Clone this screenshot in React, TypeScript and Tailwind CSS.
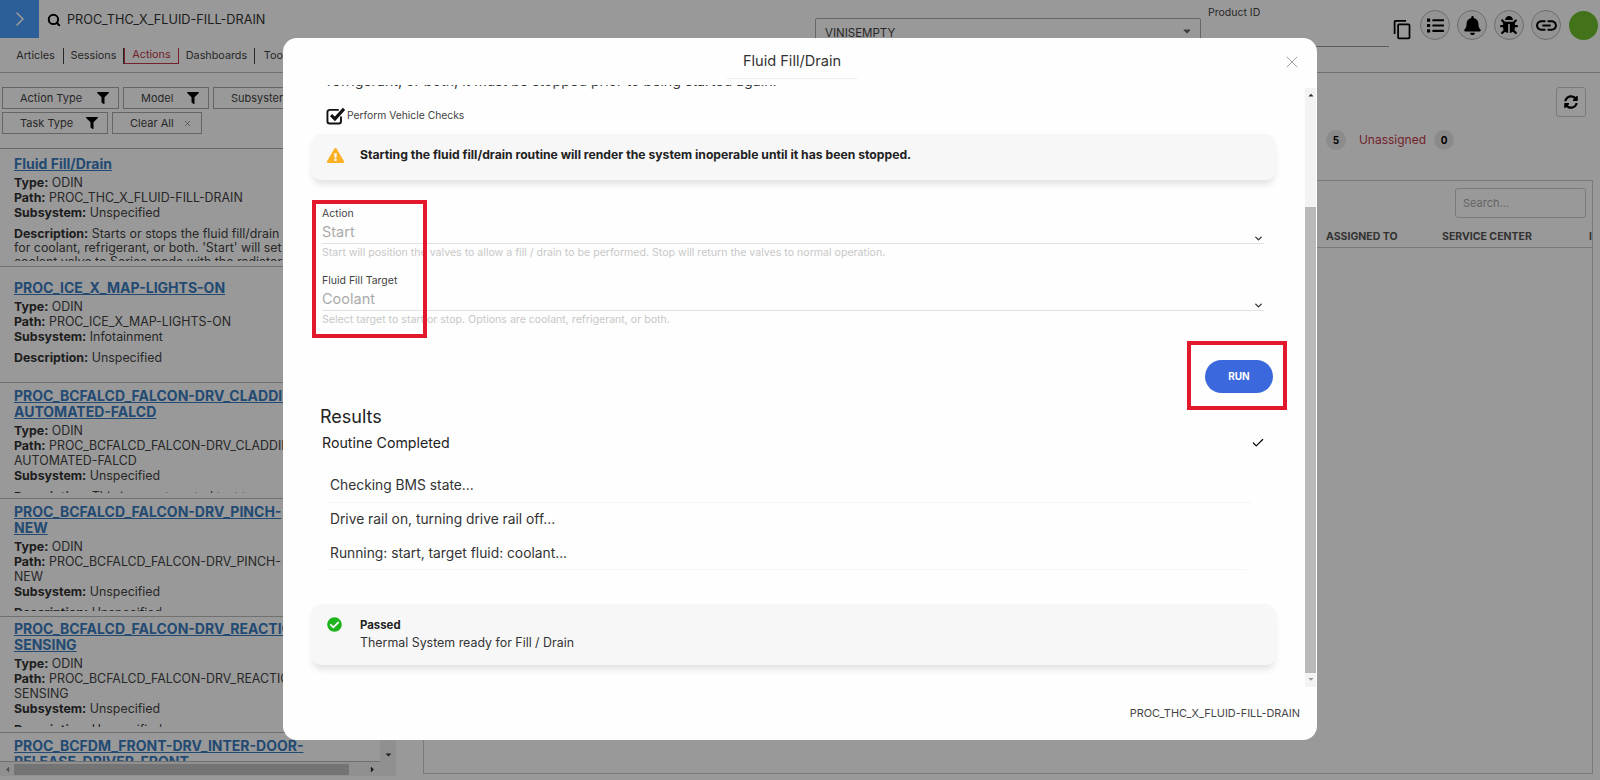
import { ChevronRight, Search, X, ChevronDown, Check } from 'lucide-react'
import { FaFilter, FaList, FaBell, FaBug, FaSyncAlt, FaExclamationTriangle, FaCheckCircle, FaCaretDown, FaCaretUp, FaCaretLeft, FaCaretRight } from 'react-icons/fa'
import { MdOutlineContentCopy, MdLink } from 'react-icons/md'

const CARDS = [
  { title: ['Fluid Fill/Drain'], path: ['PROC_THC_X_FLUID-FILL-DRAIN'], sub: 'Unspecified', desc: ['Starts or stops the fluid fill/drain routine', "for coolant, refrigerant, or both. 'Start' will set the", 'coolant valve to Series mode with the radiator'], h: 'h-[118px]', pad: 'pt-[7px] pb-[5px]' },
  { title: ['PROC_ICE_X_MAP-LIGHTS-ON'], path: ['PROC_ICE_X_MAP-LIGHTS-ON'], sub: 'Infotainment', desc: ['Unspecified'], h: 'h-[116px]', pad: 'pt-[13px] pb-[5px]' },
  { title: ['PROC_BCFALCD_FALCON-DRV_CLADDING-', 'AUTOMATED-FALCD'], path: ['PROC_BCFALCD_FALCON-DRV_CLADDING-', 'AUTOMATED-FALCD'], sub: 'Unspecified', desc: ['This is an automated test to ensure'], h: 'h-[116px]', pad: 'pt-[5px] pb-[5px]' },
  { title: ['PROC_BCFALCD_FALCON-DRV_PINCH-', 'NEW'], path: ['PROC_BCFALCD_FALCON-DRV_PINCH-', 'NEW'], sub: 'Unspecified', desc: ['Unspecified'], h: 'h-[118px]', pad: 'pt-[5px] pb-[5px]' },
  { title: ['PROC_BCFALCD_FALCON-DRV_REACTION-', 'SENSING'], path: ['PROC_BCFALCD_FALCON-DRV_REACTION-', 'SENSING'], sub: 'Unspecified', desc: ['Unspecified'], h: 'h-[116px]', pad: 'pt-[4px] pb-[5px]' },
  { title: ['PROC_BCFDM_FRONT-DRV_INTER-DOOR-', 'RELEASE-DRIVER-FRONT'], path: [], sub: '', desc: [], h: 'h-[29px]', pad: 'pt-[5px] pb-0' },
]

function FilterButton({ label, width, icon = true }: { label: string; width: string; icon?: boolean }) {
  return (
    <div className={`${width} h-[22px] border border-[#a8a8a8] flex items-center justify-between pl-[17px] pr-[9px] text-[11px] text-[#444]`}>
      <span>{label}</span>
      {icon ? <FaFilter size={12} className="text-black" /> : <X size={9} className="text-[#777]" />}
    </div>
  )
}

function Tab({ label, width, active }: { label: string; width: string; active?: boolean }) {
  return (
    <div className={`${width} h-[16px] flex items-center justify-center text-[10.8px] whitespace-nowrap ${active ? 'border border-t-0 border-[#c0394b] text-[#c0394b]' : 'border-r border-[#444] text-[#444]'}`}>
      {label}
    </div>
  )
}

function CircleIcon({ children }: { children: React.ReactNode }) {
  return (
    <div className="w-[30px] h-[30px] rounded-full border border-[#b5b5b5] bg-[#f5f5f5] flex items-center justify-center text-black">
      {children}
    </div>
  )
}

function CheckedBox() {
  return (
    <svg width="20" height="20" viewBox="0 0 18 18" fill="none" className="shrink-0">
      <path d="M13.5 9.5v4.2a2 2 0 0 1-2 2H3.3a2 2 0 0 1-2-2V5.5a2 2 0 0 1 2-2h8.2" stroke="#111" strokeWidth="1.7" />
      <path d="M4.6 8.2 8 11.6 16.2 2.6" stroke="#111" strokeWidth="2.8" />
    </svg>
  )
}

function Field({ label, value, hint }: { label: string; value: string; hint: string }) {
  return (
    <div className="h-[67px] ml-[11px] w-[942px]">
      <div className="h-[14px] leading-[14px] text-[10.5px] text-[#444]">{label}</div>
      <div className="h-[23px] border-b border-[#e2e2e2] flex items-center justify-between">
        <span className="text-[14.5px] text-[#aaa]">{value}</span>
        <ChevronDown size={11} strokeWidth={3} className="text-[#333] mt-[13px]" />
      </div>
      <div className="mt-[3px] h-[12px] leading-[12px] text-[10.6px] text-[#c8c8c8] whitespace-nowrap">{hint}</div>
    </div>
  )
}

function InfoCard({ height, children }: { height: string; children: React.ReactNode }) {
  return (
    <div className={`${height} w-[965px] rounded-[10px] bg-[#f7f7f7] shadow-[0_6px_7px_-2px_rgba(0,0,0,0.12)] relative flex items-start`}>
      {children}
    </div>
  )
}

export default function App() {
  return (
    <div className="relative h-[780px] w-[1600px] overflow-hidden bg-white font-['Inter',sans-serif] text-[#333]">
      {/* Top bar */}
      <div className="h-[48px] flex items-start">
        <div className="w-[39px] h-[38px] bg-[#4a9efc] flex items-center justify-center text-white">
          <ChevronRight size={24} strokeWidth={1.6} />
        </div>
        <Search size={14} strokeWidth={3.4} className="text-black ml-[8px] mt-[13px]" />
        <div className="ml-[6px] mt-[10px] w-[207px] text-[12.7px] text-[#333] whitespace-nowrap">PROC_THC_X_FLUID-FILL-DRAIN</div>
        <div className="ml-[541px] mt-[18px] w-[386px] h-[30px] border border-[#aaa] rounded-t-[2px] flex items-start justify-between pl-[9px] pr-[7px] pt-[6px] text-[11.5px] text-[#444]">
          VINISEMPTY
          <FaCaretDown size={12} className="text-[#666]" />
        </div>
        <div className="ml-[7px] w-[181px] h-[47px] border-b border-[#999] pt-[5px] text-[10.5px] text-[#444]">Product ID</div>
        <div className="ml-[3px] mt-[10px] flex items-center gap-[7px]">
          <MdOutlineContentCopy size={21} className="text-black mt-[8px]" />
          <CircleIcon><FaList size={17} /></CircleIcon>
          <CircleIcon><FaBell size={19} /></CircleIcon>
          <CircleIcon><FaBug size={18} /></CircleIcon>
          <CircleIcon><MdLink size={25} /></CircleIcon>
          <div className="w-[29px] h-[29px] ml-[1px] rounded-full bg-[#6fc02c]" />
        </div>
      </div>

      {/* Tabs */}
      <div className="h-[25px] border-b border-[#bbb] flex items-start pl-[8px]">
        <Tab label="Articles" width="w-[56px]" />
        <Tab label="Sessions" width="w-[60px]" />
        <Tab label="Actions" width="w-[55px]" active />
        <Tab label="Dashboards" width="w-[76px]" />
        <Tab label="Tools" width="w-[46px]" />
      </div>

      <div className="flex">
        {/* Actions list */}
        <div className="w-[396px] shrink-0">
          <div className="h-[75px] pt-[14px] pl-[2px] flex flex-col gap-[3px]">
            <div className="flex gap-[4px]">
              <FilterButton label="Action Type" width="w-[117px]" />
              <FilterButton label="Model" width="w-[86px]" />
              <FilterButton label="Subsystem" width="w-[110px]" />
            </div>
            <div className="flex gap-[4px]">
              <FilterButton label="Task Type" width="w-[106px]" />
              <FilterButton label="Clear All" width="w-[90px]" icon={false} />
            </div>
          </div>
          <div className="flex h-[632px] relative">
            <div className="w-[380px] h-[614px] overflow-hidden border-t border-[#aaa]">
              {CARDS.map((c) => (
                <div key={c.title[0]} className={`${c.h} ${c.pad} pl-[14px] border-b border-[#bbb] overflow-hidden`}>
                  <div className="h-full overflow-hidden">
                    <div className="text-[14px] leading-[16px] font-bold underline text-[#3a7cc0] whitespace-nowrap">
                      {c.title.map((t) => <div key={t}>{t}</div>)}
                    </div>
                    {c.sub && (
                      <div className="mt-[3px] text-[12.4px] leading-[15px] text-[#444] whitespace-nowrap">
                        <div><b className="text-[#333]">Type:</b> ODIN</div>
                        <div><b className="text-[#333]">Path:</b> {c.path[0]}</div>
                        {c.path[1] && <div>{c.path[1]}</div>}
                        <div><b className="text-[#333]">Subsystem:</b> {c.sub}</div>
                        <div className="mt-[6px]"><b className="text-[#333]">Description:</b> {c.desc[0]}</div>
                        {c.desc.slice(1).map((d) => <div key={d} className="leading-[14px]">{d}</div>)}
                      </div>
                    )}
                  </div>
                </div>
              ))}
            </div>
            {/* list scrollbars */}
            <div className="w-[16px] h-[614px] bg-[#f1f1f1] flex flex-col justify-end items-center pb-[1px]">
              <FaCaretDown size={9} className="text-[#333] mb-[2px]" />
            </div>
            <div className="absolute left-0 top-[614px] w-[396px] h-[14px] bg-[#f1f1f1] flex items-center justify-between px-[3px]">
              <FaCaretLeft size={9} className="text-[#888]" />
              <div className="absolute left-[14px] w-[335px] h-[11px] bg-[#c1c1c1]" />
              <FaCaretRight size={9} className="text-[#333] mr-[16px]" />
            </div>
          </div>
        </div>

        {/* Right panel */}
        <div className="flex-1 pl-[27px] pr-[7px]">
          <div className="h-[107px] relative">
            <div className="absolute right-[7px] top-[14px] w-[30px] h-[30px] border border-[#ccc] rounded-[3px] flex items-center justify-center text-black">
              <FaSyncAlt size={14} />
            </div>
            <div className="absolute right-[139px] top-[57px] w-[20px] h-[20px] rounded-full bg-[#e8e8e8] flex items-center justify-center text-[10px] font-bold text-black">0</div>
            <div className="absolute right-[167px] top-[57px] text-[12px] leading-[20px] text-[#c0394b]">Unassigned</div>
            <div className="absolute right-[247px] top-[57px] w-[20px] h-[20px] rounded-full bg-[#e8e8e8] flex items-center justify-center text-[10px] font-bold text-black">5</div>
          </div>
          <div className="h-[594px] border border-[#ccc]">
            <div className="h-[67px] border-b border-[#ccc] relative">
              <div className="absolute right-[6px] top-[7px] w-[131px] h-[30px] border border-[#ccc] rounded-[3px] flex items-center pl-[7px] text-[11px] text-[#aaa]">Search...</div>
              <div className="absolute left-[902px] top-[48px] text-[10.5px] font-bold text-[#555] whitespace-nowrap">ASSIGNED TO</div>
              <div className="absolute left-[1018px] top-[48px] text-[10.5px] font-bold text-[#555] whitespace-nowrap">SERVICE CENTER</div>
              <div className="absolute right-[0px] top-[48px] text-[10.5px] font-bold text-[#555]">I</div>
            </div>
          </div>
        </div>
      </div>

      {/* Dim layer */}
      <div className="absolute inset-0 bg-black/40" />

      {/* Fluid Fill/Drain dialog */}
      <div className="absolute left-[283px] top-[38px] w-[1034px] h-[702px] bg-[#fefefe] rounded-[14px] flex flex-col overflow-hidden">
        <div className="h-[47px] shrink-0 relative flex justify-center">
          <div className="mr-[16px] w-[130px] h-[41px] border-b border-[#eee] flex items-center justify-center text-[14.6px] text-[#333] whitespace-nowrap pt-[8px]">
            Fluid Fill/Drain
          </div>
          <X size={20} strokeWidth={1.1} className="absolute right-[15px] top-[14px] text-[#999]" />
        </div>

        <div className="h-[602px] shrink-0 flex">
          <div className="flex-1 overflow-hidden pl-[28px] relative">
            <div className="-mt-[12px] ml-[16px] h-[15px] leading-[15px] text-[14.2px] text-[#333] whitespace-nowrap">
              refrigerant, or both, it must be stopped prior to being started again.
            </div>
            <div className="mt-[19px] ml-[15px] h-[18px] flex items-center gap-[1px] text-[10.3px] text-[#444]">
              <CheckedBox />
              <span>Perform Vehicle Checks</span>
            </div>

            <div className="mt-[9px]">
              <InfoCard height="h-[46px]">
                <FaExclamationTriangle size={17} className="text-[#fbb122] ml-[16px] mt-[13px]" />
                <div className="ml-[16px] mt-[13px] text-[12.2px] leading-[16px] font-bold text-[#222] whitespace-nowrap">
                  Starting the fluid fill/drain routine will render the system inoperable until it has been stopped.
                </div>
              </InfoCard>
            </div>

            <div className="mt-[27px]">
              <Field label="Action" value="Start" hint="Start will position the valves to allow a fill / drain to be performed. Stop will return the valves to normal operation." />
              <Field label="Fluid Fill Target" value="Coolant" hint="Select target to start or stop. Options are coolant, refrigerant, or both." />
            </div>

            <div className="mt-[19px] w-[962px] flex justify-end">
              <div className="w-[68px] h-[33px] rounded-full bg-[#3b68dc] flex items-center justify-center text-[10px] font-bold text-white">RUN</div>
            </div>

            <div className="mt-[12px] ml-[9px] h-[24px] leading-[24px] text-[18px] text-[#222]">Results</div>
            <div className="mt-[4px] ml-[11px] w-[943px] h-[20px] flex items-center justify-between text-[14.2px] text-[#222]">
              <span>Routine Completed</span>
              <Check size={14} strokeWidth={2} className="text-black" />
            </div>
            <div className="mt-[17px] ml-[16px] w-[925px] text-[13.8px] text-[#333]">
              <div className="h-[33px] pl-[3px] pb-[2px] border-b border-[#f6f6f6] flex items-center">Checking BMS state...</div>
              <div className="h-[33px] pl-[3px] flex items-center">Drive rail on, turning drive rail off...</div>
              <div className="h-[34px] pl-[3px] pt-[1px] border-b border-[#f6f6f6] flex items-center w-[920px]">Running: start, target fluid: coolant...</div>
            </div>

            <div className="mt-[34px]">
              <InfoCard height="h-[61px]">
                <FaCheckCircle size={15} className="text-[#1db41d] ml-[16px] mt-[13px]" />
                <div className="ml-[18px] mt-[13px]">
                  <div className="text-[11.4px] leading-[16px] font-bold text-[#222]">Passed</div>
                  <div className="mt-[1px] text-[12.4px] leading-[18px] text-[#333]">Thermal System ready for Fill / Drain</div>
                </div>
              </InfoCard>
            </div>
          </div>

          {/* dialog scrollbar */}
          <div className="w-[11px] mt-[3px] mr-[1px] ml-[10px] bg-[#f3f3f3] flex flex-col items-center">
            <FaCaretUp size={8} className="text-[#333] mt-[3px]" />
            <div className="mt-[108px] w-full h-[466px] bg-[#b9b9b9]" />
            <FaCaretDown size={8} className="text-[#999] mt-[2px]" />
          </div>
        </div>

        <div className="flex-1 flex items-center justify-end pr-[17px] text-[10.9px] text-[#444]">PROC_THC_X_FLUID-FILL-DRAIN</div>

        {/* Red annotation boxes */}
        <div className="absolute left-[29px] top-[162px] w-[115px] h-[138px] border-[4px] border-[#e3182d]" />
        <div className="absolute left-[904px] top-[303px] w-[100px] h-[69px] border-[4px] border-[#e3182d]" />
      </div>
    </div>
  )
}
